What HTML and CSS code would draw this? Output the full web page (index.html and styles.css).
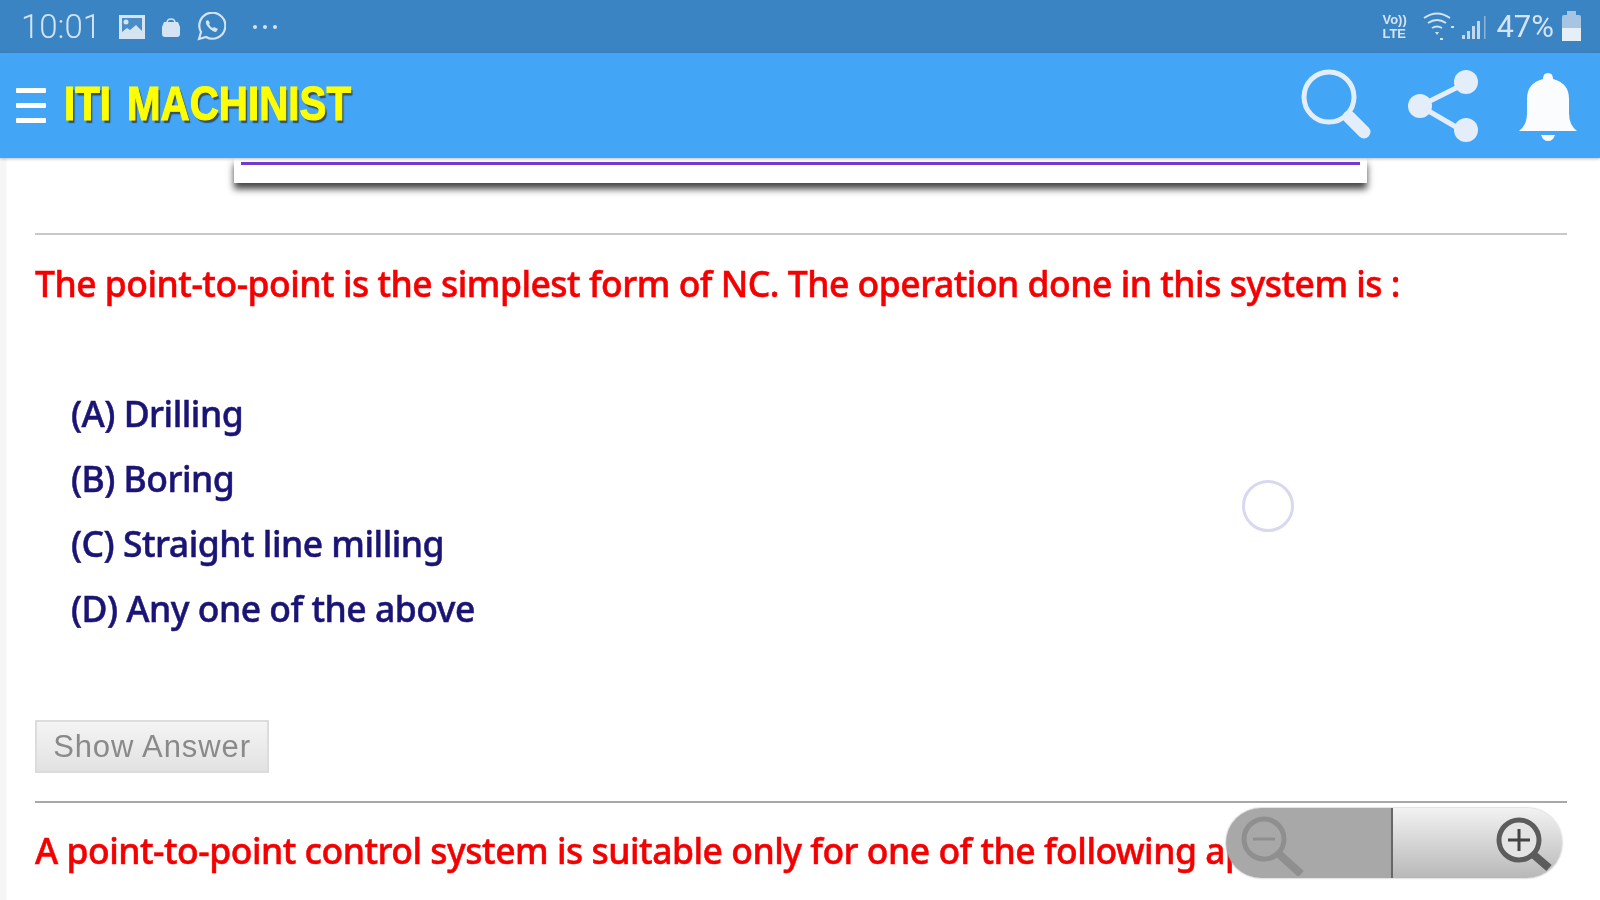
FILE: index.html
```html
<!DOCTYPE html>
<html lang="en">
<head>
    <meta charset="UTF-8">
    <meta name="viewport" content="width=device-width, initial-scale=1.0">
    <title>ITI Machinist</title>
    <link rel="stylesheet" href="styles.css">
</head>
<body>
    <div class="status-bar">
        <div class="status-left">
            <span class="clock">10:01</span>
            <svg class="st-icon" width="28" height="26" viewBox="0 0 28 26"><path d="M1 1h26v24H1z" fill="#d5e4f2"/><path d="M4 4h20v13l-6-6-6 5-3-2-5 4z" fill="#4a8cc6"/><circle cx="8" cy="8" r="2.500" fill="#d5e4f2"/></svg>
            <svg class="st-icon" width="20" height="22" viewBox="0 0 20 22"><path d="M3 6h14l2 5v7q0 3-3 3H4q-3 0-3-3v-7z" fill="#d5e4f2"/><path d="M6 7q0-4 4-4t4 4" fill="none" stroke="#d5e4f2" stroke-width="1.500"/></svg>
            <svg class="st-icon" width="30" height="30" viewBox="0 0 30 30"><path d="M3 27l2-7a13 13 0 1 1 5 5z" fill="none" stroke="#d5e4f2" stroke-width="2.200"/><path d="M10 9q-1 3 3 7t7 4l2-3-4-2-1 1q-3-1-4-4l1-1-2-3z" fill="#d5e4f2"/></svg>
            <div class="dots"><i></i><i></i><i></i></div>
        </div>
        <div class="status-right">
            <div class="volte"><b>Vo))</b><b>LTE</b></div>
            <svg width="34" height="30" viewBox="0 0 32 30"><g fill="none" stroke="#d5e4f2" stroke-width="2"><path d="M1 6q13-9 26 0"/><path d="M5 11q9-6 18 0"/><path d="M9 16q5-3 10 0"/></g><path d="M12 20h4l-2 3zM28 14h3v2h-3zM17 26h3v2h-3z" fill="#d5e4f2"/></svg>
            <svg width="26" height="28" viewBox="0 0 26 28"><path d="M1 22h3v4H1zM6 18h3v8H6zM11 13h3v13h-3zM16 8h3v18h-3z" fill="#c3d8ec"/><path d="M23 3h1.500v23H23z" fill="#8db4d8"/></svg>
            <span class="battery-text">47%</span>
            <div class="battery"><div class="battery-fill"></div></div>
        </div>
    </div>

    <header class="app-bar">
        <div class="app-left">
            <div class="burger"><i></i><i></i><i></i></div>
            <h1 class="app-title">ITI MACHINIST</h1>
        </div>
        <div class="app-actions">
            <svg width="74" height="76" viewBox="0 0 74 76"><circle cx="29" cy="29" r="25" fill="none" stroke="#e3eefa" stroke-width="5"/><path d="M49 49l15 15" stroke="#e3eefa" stroke-width="13" stroke-linecap="round"/></svg>
            <svg width="74" height="76" viewBox="0 0 74 76"><path d="M14 38L62 14M14 38l48 28" stroke="#e3eefa" stroke-width="5"/><circle cx="14" cy="38" r="12" fill="#e3eefa"/><circle cx="60" cy="14" r="12" fill="#e3eefa"/><circle cx="60" cy="62" r="12" fill="#e3eefa"/></svg>
            <svg class="bell" width="60" height="72" viewBox="0 0 60 72"><path d="M1 61q8-6 8-18V29q0-16 16-20q0-6 5-6t5 6q16 4 16 20v14q0 12 8 18z" fill="#fbfcfd"/><path d="M23 65h14q-2 6-7 6t-7-6z" fill="#fbfcfd"/></svg>
        </div>
    </header>

    <main class="content">
        <div class="top-card"><div class="top-card-line"></div></div>
        <hr class="rule rule-first">
        <p class="question">The point-to-point is the simplest form of NC. The operation done in this system is :</p>
        <ul class="options">
            <li>(A) Drilling</li>
            <li>(B) Boring</li>
            <li>(C) Straight line milling</li>
            <li>(D) Any one of the above</li>
        </ul>
        <button class="show-answer">Show Answer</button>
        <hr class="rule rule-second">
        <p class="question question-next">A point-to-point control system is suitable only for one of the following applications of lathe.</p>
    </main>

    <div class="touch-ring"></div>

    <div class="zoom-control">
        <div class="zoom-half zoom-out">
            <svg width="76" height="66" viewBox="0 0 76 66"><circle cx="31" cy="29" r="20" fill="none" stroke="#8f8f8f" stroke-width="5"/><path d="M20 29h22" stroke="#8f8f8f" stroke-width="3"/><path d="M46 44l22 20" stroke="#8f8f8f" stroke-width="8"/></svg>
        </div>
        <div class="zoom-half zoom-in">
            <svg width="76" height="66" viewBox="0 0 76 66"><circle cx="33" cy="30" r="20" fill="#e4e4e4" stroke="#5c5c5c" stroke-width="5"/><path d="M22 30h22M33 19v22" stroke="#444" stroke-width="3"/><path d="M48 45l15 13" stroke="#5c5c5c" stroke-width="8"/></svg>
        </div>
    </div>
</body>
</html>
```

FILE: styles.css
```css
html, body {
    margin: 0;
    height: 100%;
}
body {
    width: 1600px;
    height: 900px;
    position: relative;
    overflow: hidden;
    background: #fff;
    font-family: "Noto Sans", "Open Sans", sans-serif;
    filter: blur(0.5px);
}
.status-bar {
    height: 53px;
    background: #3a84c4;
    display: flex;
    justify-content: space-between;
    align-items: center;
    padding: 0 19px 0 21px;
    color: #d5e4f2;
}
.status-left, .status-right {
    display: flex;
    align-items: center;
}
.clock {
    font-family: Roboto, sans-serif;
    font-size: 33px;
    font-weight: 300;
    width: 97px;
}
.st-icon {
    margin-right: 15px;
}
.dots {
    display: flex;
    gap: 6px;
    margin-left: 12px;
}
.dots i {
    width: 4px;
    height: 4px;
    border-radius: 50%;
    background: #d5e4f2;
}
.status-right {
    gap: 5px;
}
.volte {
    display: flex;
    flex-direction: column;
    font-family: "Liberation Sans", sans-serif;
    font-size: 13px;
    line-height: 14px;
    width: 30px;
    margin-right: 5px;
}
.battery-text {
    font-family: Roboto, sans-serif;
    font-size: 31px;
    font-weight: 400;
    margin-left: 4px;
    margin-right: 3px;
}
.battery {
    width: 19px;
    height: 26px;
    margin-top: 3px;
    background: #a5c5e2;
    border-radius: 2px;
    position: relative;
}
.battery::before {
    content: "";
    position: absolute;
    top: -4px;
    left: 5px;
    width: 9px;
    height: 4px;
    background: #a5c5e2;
}
.battery-fill {
    height: 13px;
    background: #e6eff8;
    position: absolute;
    bottom: 0;
    left: 0;
    right: 0;
}
.app-bar {
    height: 105px;
    background: #42a5f5;
    display: flex;
    justify-content: space-between;
    align-items: center;
    padding: 0 22px 0 16px;
    box-shadow: 0 1px 3px rgba(0, 0, 0, 0.25);
    position: relative;
}
.app-left {
    display: flex;
    align-items: center;
    gap: 18px;
}
.burger {
    display: flex;
    flex-direction: column;
    gap: 10px;
    width: 30px;
}
.burger i {
    height: 5px;
    background: #fff;
    border-radius: 1px;
}
.app-title {
    margin: 0 0 3px;
    font-family: "Liberation Sans", sans-serif;
    font-size: 42px;
    font-weight: 700;
    color: #ffff00;
    word-spacing: 5px;
    white-space: nowrap;
    transform: scale(0.96, 1.14);
    transform-origin: left center;
    -webkit-text-stroke: 1px #ffff00;
    text-shadow: 2px 3px 1px #33506e;
}
.app-actions {
    display: flex;
    align-items: center;
    gap: 32px;
}
.bell {
    margin-left: 6px;
}
.content {
    height: 742px;
    padding: 0 33px 0 35px;
    background: linear-gradient(90deg, #f6f6f6 6px, #fff 7px);
}
.top-card {
    width: 1133px;
    height: 25px;
    margin-left: 199px;
    padding: 4px 7px 0;
    box-sizing: border-box;
    background: #fff;
    box-shadow: 0 6px 7px #444;
}
.top-card-line {
    height: 3px;
    background: #6f3bd0;
}
.rule {
    border: 0;
    height: 2px;
    margin: 0;
    background: #c8c8c8;
}
.rule-first {
    margin-top: 50px;
}
.rule-second {
    margin-top: 28px;
    background: #a8a8a8;
}
.question {
    margin: 0;
    color: #f40000;
    font-size: 35.5px;
    font-weight: 500;
    letter-spacing: -0.5px;
    white-space: nowrap;
    line-height: 50px;
    -webkit-text-stroke: 0.5px #f40000;
}
.rule-first + .question {
    margin-top: 23px;
}
.question-next {
    margin-top: 22px;
}
.options {
    list-style: none;
    margin: 73px 0 0;
    padding: 0 0 0 36px;
    color: #1a1475;
    font-size: 35.5px;
    font-weight: 500;
    letter-spacing: -0.5px;
    line-height: 65px;
    -webkit-text-stroke: 0.5px #1a1475;
}
.show-answer {
    display: block;
    margin-top: 79px;
    width: 234px;
    height: 53px;
    padding: 0;
    border: 2px solid #dcdcdc;
    background: linear-gradient(#f4f4f4, #e2e2e2);
    color: #8a8a8a;
    font-family: "Liberation Sans", sans-serif;
    font-size: 31px;
    letter-spacing: 0.9px;
}
.touch-ring {
    position: absolute;
    left: 1242px;
    top: 480px;
    width: 46px;
    height: 46px;
    border: 3px solid #d8d8f0;
    border-radius: 50%;
}
.zoom-control {
    position: absolute;
    left: 1226px;
    top: 808px;
    width: 336px;
    height: 70px;
    display: flex;
    border-radius: 35px;
    overflow: hidden;
    box-shadow: 0 0 2px #999;
}
.zoom-half {
    display: flex;
    align-items: center;
}
.zoom-out {
    flex: 0 0 167px;
    box-sizing: border-box;
    background: #a8a8a8;
    border-right: 2px solid #666;
    padding-left: 7px;
}
.zoom-in {
    flex: 1;
    background: linear-gradient(#f2f2f2, #b8b8b8);
    justify-content: flex-end;
}
```
